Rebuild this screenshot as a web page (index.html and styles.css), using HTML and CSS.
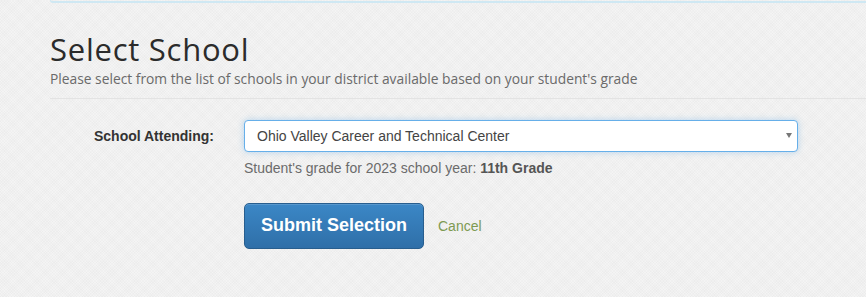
FILE: index.html
```html
<!DOCTYPE html>
<html lang="en">
<head>
<meta charset="utf-8">
<title>Select School</title>
<link rel="stylesheet" href="styles.css">
</head>
<body>
<div class="page">
  <div class="top-panel"></div>
  <header class="section-head">
    <h1 class="title">Select School</h1>
    <p class="subtitle">Please select from the list of schools in your district available based on your student's grade</p>
  </header>
  <form class="form">
    <div class="row">
      <label class="label" for="school">School Attending:</label>
      <div class="field">
        <div class="select-wrap">
          <select id="school" class="select">
            <option>Ohio Valley Career and Technical Center</option>
          </select>
          <span class="caret"></span>
        </div>
        <p class="help">Student's grade for 2023 school year: <strong>11th Grade</strong></p>
      </div>
    </div>
    <div class="row actions">
      <div class="label"></div>
      <div class="field buttons">
        <button type="button" class="btn-primary">Submit Selection</button>
        <a href="#" class="cancel">Cancel</a>
      </div>
    </div>
  </form>
</div>
</body>
</html>
```

FILE: styles.css
```css
html, body {
  margin: 0;
  padding: 0;
}
body {
  background-color: #f4f4f4;
  background-image:
    repeating-linear-gradient(45deg, rgba(0,0,0,0.014) 0 1px, transparent 1px 2px),
    repeating-linear-gradient(-45deg, rgba(0,0,0,0.014) 0 1px, transparent 1px 2px);
  height: 297px;
  overflow: hidden;
  font-family: "Liberation Sans", Arial, sans-serif;
}
.page {
  padding-left: 50px;
}
.top-panel {
  height: 2px;
  border-bottom: 2px solid #cfe8f3;
  border-left: 1px solid #cfe8f3;
  border-bottom-left-radius: 3px;
  margin-top: -1px;
}
.section-head {
  border-bottom: 1px solid #e3e3e3;
  padding-bottom: 10px;
}
.title {
  margin: 28px 0 0 0;
  font-family: "Open Sans", "Lato", sans-serif;
  font-weight: 400;
  font-size: 31px;
  line-height: 36px;
  color: #2b2b2b;
  letter-spacing: 0.75px;
}
.subtitle {
  margin: 3px 0 0 0;
  font-family: "Open Sans", "Lato", sans-serif;
  font-size: 13.8px;
  line-height: 18px;
  color: #6a6a6a;
}
.form {
  padding-top: 21px;
}
.row {
  display: flex;
  align-items: flex-start;
}
.label {
  width: 164px;
  flex: none;
  text-align: right;
  padding-top: 8px;
  margin-right: 30px;
  font-weight: bold;
  font-size: 14px;
  color: #333;
}
.field {
  flex: none;
}
.select-wrap {
  position: relative;
  width: 554px;
}
.select {
  appearance: none;
  -webkit-appearance: none;
  box-sizing: border-box;
  width: 554px;
  height: 32px;
  border: 1px solid #66afe9;
  border-radius: 4px;
  background: #fff;
  box-shadow: 0 0 6px rgba(102,175,233,0.45);
  padding: 0 12px 1px 12px;
  font-family: "Liberation Sans", Arial, sans-serif;
  font-size: 14px;
  color: #444;
  outline: none;
}
.caret {
  position: absolute;
  right: 6px;
  top: 13px;
  width: 0;
  height: 0;
  border-left: 3.5px solid transparent;
  border-right: 3.5px solid transparent;
  border-top: 5px solid #777;
}
.help {
  margin: 8px 0 0 0;
  font-size: 14px;
  line-height: 16px;
  color: #6b6b6b;
}
.help strong {
  color: #555;
}
.actions {
  margin-top: 27px;
}
.buttons {
  display: flex;
  align-items: center;
  gap: 14px;
}
.btn-primary {
  box-sizing: border-box;
  width: 180px;
  height: 46px;
  border: 1px solid #285e8e;
  border-radius: 5px;
  background: linear-gradient(#3b87c6, #2f6fa8);
  color: #fff;
  font-family: "Liberation Sans", Arial, sans-serif;
  font-weight: bold;
  font-size: 18px;
  padding: 0 0 2px 0;
  box-shadow: inset 0 1px 0 rgba(255,255,255,0.15);
  cursor: pointer;
}
.cancel {
  font-size: 14px;
  color: #7d9a52;
  text-decoration: none;
  margin-bottom: 1px;
}
```
